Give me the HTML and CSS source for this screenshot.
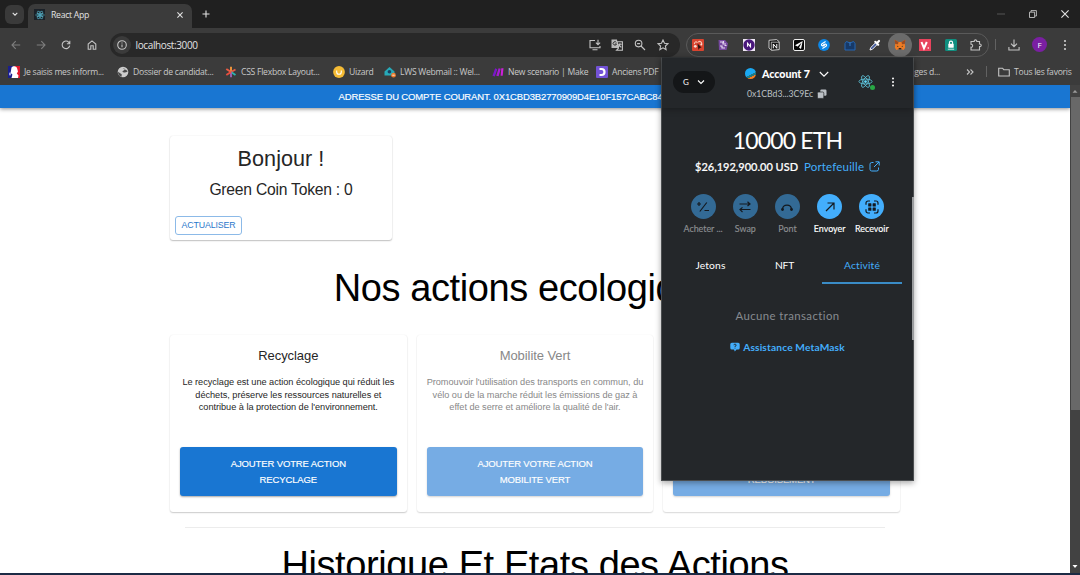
FILE: index.html
```html
<!DOCTYPE html>
<html lang="fr">
<head>
<meta charset="utf-8">
<title>React App</title>
<link rel="stylesheet" href="styles.css">
</head>
<body>
<svg width="0" height="0" class="defs">
  <symbol id="react" viewBox="-12 -12 24 24"><g fill="none" stroke="#5fc5dc" stroke-width="1.3"><ellipse rx="10.5" ry="4"/><ellipse rx="10.5" ry="4" transform="rotate(60)"/><ellipse rx="10.5" ry="4" transform="rotate(120)"/></g><circle r="2.2" fill="#61dafb"/></symbol>
</svg>
<div class="browser">
  <div class="tabstrip">
    <div class="tab-search"><svg width="8" height="8" viewBox="0 0 8 8"><path d="M1.7 2.8 4 5.1 6.3 2.8" class="ln light"/></svg></div>
    <div class="tab">
      <span class="favicon"><svg width="10" height="10"><use href="#react"/></svg></span>
      <span class="tab-title">React App</span>
      <svg class="tab-close" width="8" height="8" viewBox="0 0 8 8"><path d="M1.4 1.4 6.6 6.6M6.6 1.4 1.4 6.6" class="ln light"/></svg>
    </div>
    <svg class="newtab" width="8" height="8" viewBox="0 0 8 8"><path d="M4 .5V7.5M.5 4H7.5" class="ln light"/></svg>
    <div class="winbtns">
      <svg width="8" height="8" viewBox="0 0 8 8"><path d="M0 4H8" stroke="#555"/></svg>
      <svg width="8" height="8" viewBox="0 0 8 8"><path d="M.5 2.2H5.6V7.5H.5ZM2 2V.6H7.4V6H6" class="ln thin"/></svg>
      <svg width="8" height="8" viewBox="0 0 8 8"><path d="M.4 .4 7.6 7.6M7.6 .4 .4 7.6" class="ln light"/></svg>
    </div>
  </div>

  <div class="toolbar">
    <div class="nav">
      <svg width="10" height="10" viewBox="0 0 10 10"><path d="M9.2 5H1M4.7 1.2 1 5 4.7 8.8" class="ln dim"/></svg>
      <svg width="10" height="10" viewBox="0 0 10 10"><path d="M.8 5H9M5.3 1.2 9 5 5.3 8.8" class="ln dim"/></svg>
      <svg width="10" height="10" viewBox="0 0 10 10"><path d="M8.7 5.6A3.8 3.8 0 1 1 7.8 2.3L8.7 3.5M8.8 .8V3.7H5.9" class="ln"/></svg>
      <svg width="10" height="10" viewBox="0 0 10 10"><path d="M1.2 9.3V4L5 .9 8.8 4V9.3H6.2V5.8H3.8V9.3Z" class="ln"/></svg>
    </div>
    <div class="omnibox">
      <span class="siteinfo"><svg width="10" height="10" viewBox="0 0 10 10"><circle cx="5" cy="5" r="4.3" class="ln"/><path d="M5 4.5V7.3M5 2.5V3.6" class="ln"/></svg></span>
      <span class="url">localhost:3000</span>
      <span class="omni-actions">
        <svg width="12" height="12" viewBox="0 0 12 12"><path d="M6 1.5H1V8.8H11V7M3.5 10.7H8.5M9 .8V5.6M6.9 3.7 9 5.8 11.1 3.7" class="ln"/></svg>
        <svg width="12" height="12" viewBox="0 0 12 12"><path d="M.5 .5H6L7.5 9H.5Z" fill="#b9b9b9"/><path d="M6 2.8H11.4V11.3H5.5L7.5 9ZM7 5.2H10.6M9 4.2C9 6 8.3 7.4 7.2 8M7.9 6 10.3 8.4" class="ln"/><path d="M5.4 3.6A1.7 1.7 0 1 0 5.5 5H4" fill="none" stroke="#333"/></svg>
        <svg width="12" height="12" viewBox="0 0 12 12"><circle cx="4.6" cy="4.6" r="3.3" class="ln"/><path d="M7 7 11 11M3.1 4.6H6.1" class="ln"/></svg>
        <svg width="12" height="12" viewBox="0 0 12 12"><path d="M6 1 7.5 4.3 11 4.7 8.4 7 9.1 10.6 6 8.8 2.9 10.6 3.6 7 1 4.7 4.5 4.3Z" class="ln"/></svg>
      </span>
    </div>
    <div class="extensions">
      <svg viewBox="0 0 12 12"><rect width="12" height="12" rx="1" fill="#d9442f"/><path d="M2.3 5.2C2.8 2.2 4.8 2.2 5.3 4M6.3 3.3C7.3 1.6 9.6 2.6 9.8 5" fill="none" stroke="#f5c9b8" stroke-width="1.1"/><circle cx="3.3" cy="7.3" r="1.4" fill="#f9ded3"/><circle cx="9.3" cy="5.5" r="1" fill="#f9ded3"/><path d="M5.5 4.5 9.5 8.6 7.7 9 6.5 11Z" fill="#2a1512"/></svg>
      <svg viewBox="0 0 12 12"><path d="M1.5 1H8L11 4.5 9.5 11H2Z" fill="#76489f"/><path d="M3 3H6V5H9M3 7H5V9H8M7.5 6.5H9.5M6.5 2V4" fill="none" stroke="#e5d8f0" stroke-width="1.2"/></svg>
      <svg viewBox="0 0 12 12"><rect width="12" height="12" fill="#efe8f5"/><circle cx="6" cy="6" r="5.7" fill="#49177b"/><path d="M4.5 7.7V4.3L7.5 7.7V4.3" class="ln white"/></svg>
      <svg viewBox="0 0 12 12"><path d="M1 1.3 8.7.6 11.2 2.7V10.6L3.5 11.3 1 9Z" fill="#151515" stroke="#ddd" stroke-width=".9"/><path d="M3.2 3.2H11M3.3 3.2V11" stroke="#ddd" stroke-width=".7"/><path d="M5.3 9.3V5L8.8 9.3V5" fill="none" stroke="#fff"/></svg>
      <svg viewBox="0 0 12 12"><rect x=".5" y=".5" width="11" height="11" rx="1.5" fill="#080808" stroke="#eee"/><path d="M9.7 2 2 6.3 4.5 7.4 8 10Z" fill="#fff"/><path d="M4.6 7.5 8.7 3.5 5.5 9.8Z" fill="#080808"/></svg>
      <svg viewBox="0 0 12 12"><circle cx="6" cy="6" r="5.9" fill="#0c87e8"/><path d="M7.6 2.6 4.4 4.4C2.4 5.6 3.8 7.6 5.6 6.7L7.4 5.6M4.4 9.4 7.6 7.6C9.6 6.4 8.2 4.4 6.4 5.3L4.6 6.4" class="ln white"/></svg>
      <svg viewBox="0 0 12 12"><path d="M1 11V4.5L2.5 2.5 6 4 9.5 2.5 11 4.5V11Z" fill="#173967" stroke="#2467b5"/><path d="M6 3V7" fill="none" stroke="#347bc8"/></svg>
      <svg viewBox="0 0 12 12"><path d="M1 11 1.7 8.6 7 3.3 8.7 5 3.4 10.3Z" fill="#40589b" stroke="#f2f2f2"/><path d="M6.3 2.8 9.2 5.7M7.8 4.2 10 2" stroke="#fff" stroke-width="2.2" stroke-linecap="round"/></svg>
      <span class="ext-active"><svg viewBox="0 0 12 12"><path d="M.7.7 4.5 3H7.5L11.3.7 10.8 5 11.2 8.4 9.7 11 7.5 10.2H4.5L2.3 11 .8 8.4 1.2 5Z" fill="#ed7b25"/><path d="M.7.7 4.5 3 4 5.2 1.2 5ZM11.3.7 7.5 3 8 5.2 10.8 5Z" fill="#9c4b20"/><path d="M2.8 6.5 4.7 7.7 3.6 7.9ZM9.2 6.5 7.3 7.7 8.4 7.9Z" fill="#232"/><path d="M4.7 9H7.3V10.4H4.7Z" fill="#33231c"/></svg></span>
      <svg viewBox="0 0 12 12"><rect width="12" height="12" fill="#e8435d"/><path d="M2.5 3 5 9.2 7.8 3" fill="none" stroke="#fff" stroke-width="2"/><circle cx="9.3" cy="9" r=".8" fill="#fff"/></svg>
      <svg viewBox="0 0 12 12"><rect width="12" height="12" rx="1.5" fill="#108f80"/><rect x="3.3" y="4.8" width="5.4" height="4" rx=".6" fill="#fff"/><path d="M4.4 5V3.7A1.6 1.6 0 0 1 7.6 3.7V5" class="ln white"/><path d="M2.8 10.2H9.2" stroke="#c6eae5"/></svg>
      <svg viewBox="0 0 12 12"><path d="M1 2.5H4.2C3.8 .3 7.2 .3 6.8 2.5H9.5V5C11.8 4.6 11.8 8 9.5 7.6V11H1V8.2C3.2 8.4 3.2 5 1 5.2Z" class="ln"/></svg>
    </div>
    <span class="sep"></span>
    <svg class="download" width="12" height="12" viewBox="0 0 12 12"><path d="M6 .5V7.5M3 4.7 6 7.7 9 4.7M.9 8V11H11.1V8" class="ln"/></svg>
    <span class="avatar">F</span>
    <svg class="kebab" width="4" height="12" viewBox="0 0 4 12"><g fill="#d0d0d0"><circle cx="2" cy="2" r="1.1"/><circle cx="2" cy="6" r="1.1"/><circle cx="2" cy="10" r="1.1"/></g></svg>
  </div>

  <div class="bookmarks">
    <a><svg viewBox="0 0 12 12"><path d="M0 0H6V12H0Z" fill="#1a1e8c"/><path d="M6 0H12V12H6Z" fill="#e3182d"/><path d="M3.5 1.5C5-.3 9-.1 9.3 3L10 5.5 8.8 7.5 10.5 9.5 10 12H3.5L4.4 8.5 2.6 7Z" fill="#fff"/><path d="M1 8H3M2 6.5V9.5" stroke="#cdd0ff"/></svg>Je saisis mes inform...</a>
    <a><svg viewBox="0 0 12 12"><circle cx="6" cy="6" r="5.3" fill="#ccc"/><path d="M5.7 2C8 2 8.3 3.8 6.7 4.5 4.8 5.3 5.2 6.2 7.4 6.4 8.8 6.6 10.5 6 10.7 5M1 5.8 4.7 8.2 4.6 10.7C2.4 10.5 1 8.7 1 5.8ZM8 9.7 10.6 7.5" fill="#4a4a4a"/></svg>Dossier de candidat...</a>
    <a><svg viewBox="0 0 12 12"><g stroke-width="1.9"><path d="M6 6V.8" stroke="#f4983a"/><path d="M6 6 10.5 3.5" stroke="#e85c45"/><path d="M6 6 10.5 9" stroke="#2ab6b0"/><path d="M6 6V11.3" stroke="#9c62b3"/><path d="M6 6 1.3 9" stroke="#e94e3e"/><path d="M6 6 1.3 3" stroke="#ed5c43"/></g></svg>CSS Flexbox Layout...</a>
    <a><svg viewBox="0 0 12 12"><circle cx="6" cy="6" r="5.9" fill="#f5bb35"/><path d="M3.7 4.5V6A2.3 2.3 0 0 0 8.3 6V4.5" class="ln white"/></svg>Uizard</a>
    <a><svg viewBox="0 0 12 12"><path d="M.5 5.5 5.5 1 10.5 5.5V9.5H.5Z" fill="#27a9b8"/><circle cx="5.4" cy="5.7" r="1.8" fill="#193f61"/><circle cx="9.5" cy="9.2" r="2.4" fill="#ed7b2d"/><path d="M8.3 9.2H10.7" stroke="#fff" stroke-width=".8"/></svg>LWS Webmail :: Wel...</a>
    <a><svg viewBox="0 0 12 12"><path d="M.5 9.7 3.2 2.3 5.3 3.3 2.8 10.4Z" fill="#7b18c9"/><path d="M4.3 9.8 6.6 2.2 8.7 2.8 6.6 10.2Z" fill="#a91ad5"/><path d="M8.6 9.8 9.3 2.2H11.5L10.7 9.8Z" fill="#cd20d8"/></svg>New scenario | Make</a>
    <a><svg viewBox="0 0 12 12"><rect width="12" height="12" rx="1" fill="#7352d6"/><path d="M3.5 3H5.5A3 3 0 0 1 5.5 9H3.5" fill="none" stroke="#fff" stroke-width="2.2"/></svg>Anciens PDF</a>
    <span class="bm-cut">ages d...</span>
    <svg class="bm-more" viewBox="0 0 8 8"><path d="M1 1.5 3.5 4 1 6.5M4.5 1.5 7 4 4.5 6.5" class="ln"/></svg>
    <span class="sep"></span>
    <svg class="folder" viewBox="0 0 12 10"><path d="M.7 1.2H4.5L5.8 2.7H11.3V9H.7Z" class="ln"/></svg>
    <span class="bm-all">Tous les favoris</span>
  </div>
</div>

<div class="viewport">
  <main class="page">
    <header class="appbar">ADRESSE DU COMPTE COURANT. 0X1CBD3B2770909D4E10F157CABC84</header>
    <div class="content">
      <section class="card balance">
        <h5>Bonjour !</h5>
        <h6>Green Coin Token : 0</h6>
        <button class="outlined">ACTUALISER</button>
      </section>
      <h1 class="actions-title">Nos actions ecologiques</h1>
      <div class="cards">
        <section class="card action">
          <h6>Recyclage</h6>
          <p>Le recyclage est une action écologique qui réduit les<br>déchets, préserve les ressources naturelles et<br>contribue à la protection de l'environnement.</p>
          <button class="contained">AJOUTER VOTRE ACTION<br>RECYCLAGE</button>
        </section>
        <section class="card action disabled">
          <h6>Mobilite Vert</h6>
          <p>Promouvoir l'utilisation des transports en commun, du<br>vélo ou de la marche réduit les émissions de gaz à<br>effet de serre et améliore la qualité de l'air.</p>
          <button class="contained">AJOUTER VOTRE ACTION<br>MOBILITE VERT</button>
        </section>
        <section class="card action disabled">
          <h6></h6>
          <p></p>
          <button class="contained">AJOUTER VOTRE ACTION<br>REBOISEMENT</button>
        </section>
      </div>
      <hr>
      <h1 class="history-title">Historique Et Etats des Actions</h1>
    </div>
  </main>
  <div class="scrollbar">
    <svg width="10" height="12" viewBox="0 0 10 12"><path d="M2.5 7.7 5 5 7.5 7.7Z" fill="#9a9a9a"/></svg>
    <div class="thumb"></div>
    <svg width="10" height="14" viewBox="0 0 10 14"><path d="M2.5 6 5 9 7.5 6Z" fill="#fff"/></svg>
  </div>
</div>
<div class="taskbar-edge"></div>

<aside class="wallet">
  <div class="w-head">
    <div class="network">G<svg width="8" height="8" viewBox="0 0 8 8"><path d="M1 2.5 4 5.5 7 2.5" class="ln white"/></svg></div>
    <div class="account">
      <div class="acc-name"><span class="jazz"></span><b>Account 7</b><svg width="10" height="8" viewBox="0 0 10 8"><path d="M.8 2 5 6.2 9.2 2" class="ln white"/></svg></div>
      <div class="acc-addr"><span>0x1CBd3...3C9Ec</span><svg width="10" height="10" viewBox="0 0 10 10"><rect x="3.3" y=".5" width="6.2" height="6.2" rx="1.2" fill="#bbc0c5"/><rect x=".4" y="3" width="6.4" height="6.4" rx="1.2" fill="#bbc0c5" stroke="#24272a" stroke-width=".7"/></svg></div>
    </div>
    <div class="dapp"><svg width="15" height="15"><use href="#react"/></svg><i></i></div>
    <svg class="w-kebab" width="4" height="12" viewBox="0 0 4 12"><g fill="#fff"><circle cx="2" cy="2.5" r="1"/><circle cx="2" cy="6" r="1"/><circle cx="2" cy="9.5" r="1"/></g></svg>
  </div>
  <div class="amount">10000 ETH</div>
  <div class="fiat"><span class="usd">$26,192,900.00 USD</span><span class="portfolio">Portefeuille</span><svg width="11" height="11" viewBox="0 0 11 11"><path d="M4.5 1.5H2.7A1.7 1.7 0 0 0 1 3.2V8.3A1.7 1.7 0 0 0 2.7 10H7.8A1.7 1.7 0 0 0 9.5 8.3V6.5M6.5 .8H10.2V4.5M10 1 5 6" fill="none" stroke="#43aefc"/></svg></div>
  <div class="w-actions">
    <div class="off"><span><svg viewBox="0 0 14 14"><path d="M1 4H5M3 2V6M8.5 10.5H13M3.8 11.5 10.8 2.5" class="dk"/></svg></span>Acheter ...</div>
    <div class="off"><span><svg viewBox="0 0 14 14"><path d="M1.5 4H12M9.5 1.7 12 4 9.5 6M12.5 9.5H2M4.5 7.4 2 9.6 4.5 12" class="dk"/></svg></span>Swap</div>
    <div class="off"><span><svg viewBox="0 0 14 14"><path d="M2.5 9C3 3.7 11 3.7 11.5 9" class="dk"/><circle cx="2.5" cy="9.5" r="1.4"/><circle cx="11.5" cy="9.5" r="1.4"/></svg></span>Pont</div>
    <div><span><svg viewBox="0 0 14 14"><path d="M3 11 11 3M4.5 3H11V9.5" class="dk"/></svg></span>Envoyer</div>
    <div><span><svg viewBox="0 0 14 14"><path d="M1 4.8V3A2 2 0 0 1 3 1H5M9 1H11A2 2 0 0 1 13 3V4.8M13 9.2V11A2 2 0 0 1 11 13H9M5 13H3A2 2 0 0 1 1 11V9.2" class="dk"/><rect x="3.2" y="3.2" width="3.2" height="3.2" rx=".5"/><rect x="7.6" y="3.2" width="3.2" height="3.2" rx=".5"/><rect x="3.2" y="7.6" width="3.2" height="3.2" rx=".5"/><rect x="7.6" y="7.6" width="3.2" height="3.2" rx=".5"/></svg></span>Recevoir</div>
  </div>
  <div class="w-tabs"><span>Jetons</span><span class="nft">NFT</span><span class="current">Activité</span></div>
  <div class="empty">Aucune transaction</div>
  <div class="help"><svg width="10" height="10" viewBox="0 0 10 10"><path d="M1.8 .7H8.2Q9.7.7 9.7 2.2V6Q9.7 7.5 8.2 7.5H6.5L4.8 9.5 4 7.5H1.8Q.3 7.5.3 6V2.2Q.3.7 1.8.7Z" fill="#43aefc"/><path d="M3.9 3.2A1.1 1.1 0 1 1 5 4.3V5M5 5.7V6.5" fill="none" stroke="#24272a" stroke-width=".9"/></svg>Assistance MetaMask</div>
  <div class="w-scroll"></div>
</aside>
</body>
</html>
```
FILE: styles.css
```css
* { box-sizing: border-box; }
body { margin: 0; width: 1080px; height: 575px; overflow: hidden; display: flex; flex-direction: column; background: #fff; font-family: "Liberation Sans", Arial, sans-serif; }
h1, h5, h6, p { margin: 0; font-weight: 400; }
svg { display: block; flex: none; }
.defs { position: absolute; }
.ln { fill: none; stroke: #c4c4c4; stroke-width: 1.1; }
.ln.light { stroke: #e2e2e2; }
.ln.thin { stroke: #d8d8d8; stroke-width: .8; }
.ln.dim { stroke: #7e7e7e; }
.ln.white { stroke: #fff; }

/* browser chrome */
.browser { flex: none; height: 85px; background: #3b3b3b; font-family: "Open Sans", "Noto Sans", sans-serif; color: #d2d2d2; }
.tabstrip { height: 28px; background: #202020; display: flex; align-items: center; padding-left: 5px; }
.tab-search { width: 19px; height: 19px; border-radius: 6px; background: #3a3a3a; display: grid; place-items: center; }
.tab { align-self: flex-end; height: 24px; width: 164px; margin-left: 4px; padding: 0 8px 3px 6px; background: #3b3b3b; border-radius: 7px 7px 0 0; display: flex; align-items: center; }
.favicon { width: 11px; height: 11px; background: #1b2128; display: grid; place-items: center; }
.tab-title { margin-left: 6px; font-size: 8.7px; letter-spacing: -.3px; color: #e3e3e3; flex: 1; }
.newtab { margin-left: 10px; }
.winbtns { margin-left: auto; margin-right: 11px; display: flex; gap: 24px; }
.toolbar { height: 30px; background: #3b3b3b; display: flex; align-items: center; padding: 3px 0 0 11px; }
.nav { display: flex; gap: 15.2px; }
.omnibox { margin-left: 13px; width: 570px; height: 24px; border-radius: 12px; background: #282828; display: flex; align-items: center; padding: 0 11px 0 3px; }
.siteinfo { width: 18px; height: 18px; border-radius: 50%; background: #3b3b3b; display: grid; place-items: center; }
.url { margin-left: 5px; font-size: 10px; letter-spacing: -.38px; color: #e3e3e3; flex: 1; }
.omni-actions { display: flex; gap: 10.7px; }
.extensions { margin-left: 6.5px; width: 303px; height: 24px; border: 1px solid #5a5a5a; border-radius: 12px; padding: 0 6px 0 5px; display: flex; align-items: center; justify-content: space-between; }
.extensions svg { width: 12px; height: 12px; }
.ext-active { width: 24px; height: 24px; margin: 0 -6px; border-radius: 50%; background: #6b6b6b; display: grid; place-items: center; }
.sep { width: 1px; height: 11px; background: #626262; }
.toolbar .sep { margin-left: 6px; }
.download { margin-left: 12px; }
.avatar { margin-left: 12px; width: 15px; height: 15px; border-radius: 50%; background: #7a1fa2; color: #fff; font-size: 8px; line-height: 15px; text-align: center; }
.kebab { margin-left: 16px; }
.bookmarks { height: 27px; display: grid; grid-template-columns: 109px 108px 108px 51px 108px 104px 64px 292px 20px 12px 16px 1fr; padding-left: 8px; align-items: center; font-size: 8.6px; letter-spacing: -.26px; white-space: nowrap; color: #c9c9c9; }
.bookmarks a { display: flex; align-items: center; gap: 4px; }
.bookmarks a svg { width: 12px; height: 12px; }
.bm-cut { justify-self: end; padding-right: 12px; }
.bm-more { width: 8px; height: 8px; margin-left: 14px; }
.bookmarks .sep { margin-left: 14px; }
.folder { width: 12px; height: 10px; margin-left: 14px; }
.bm-all { margin-left: 14px; }

/* application page */
.viewport { flex: none; height: 488px; display: flex; }
.page { width: 1070px; overflow: hidden; background: #fff; }
.appbar { height: 23px; padding-left: 338.5px; background: #1976d2; color: #fff; font-size: 9.5px; letter-spacing: -.14px; line-height: 24px; box-shadow: 0 1px 4px rgba(0,0,0,.45); white-space: nowrap; -webkit-text-stroke: .15px; }
.content { width: 730px; margin: 0 auto; padding-top: 28px; display: flex; flex-direction: column; text-align: center; color: #262626; }
.card { background: #fff; border-radius: 3px; box-shadow: 0 1px 1.5px rgba(0,0,0,.24), 0 0 1.5px rgba(0,0,0,.1); }
.balance { width: 222px; height: 104px; padding: 10px 5px 5px; display: flex; flex-direction: column; }
.balance h5 { font-size: 21.6px; line-height: 26px; letter-spacing: .04px; }
.balance h6 { font-size: 15.7px; letter-spacing: -.24px; line-height: 20px; margin-top: 8px; }
.outlined { margin: auto auto 0 0; width: 67px; height: 19px; padding: 0 0 2px; border: 1px solid #8cbae8; border-radius: 3px; background: #fff; color: #2b78cb; font: 8.8px "Liberation Sans", Arial, sans-serif; letter-spacing: -.12px; }
h1 { font-size: 38px; letter-spacing: -.4px; line-height: 44px; color: #000; }
.actions-title { margin-top: 26px; }
.cards { display: grid; grid-template-columns: repeat(3, 1fr); gap: 10px; margin-top: 25px; }
.action { height: 177px; padding: 13px 10px 16px; display: flex; flex-direction: column; box-shadow: 0 1px 1.5px rgba(0,0,0,.2), 0 0 1.5px rgba(0,0,0,.08); }
.action h6 { font-size: 13px; letter-spacing: -.07px; line-height: 16px; height: 16px; }
.action p { margin: 12px -5px 0; font-size: 9.2px; letter-spacing: -.03px; line-height: 12.7px; white-space: nowrap; }
.contained { margin-top: auto; height: 49px; padding: 0; border: 0; border-radius: 3px; background: #1976d2; color: #fff; font: 9.5px/15.4px "Liberation Sans", Arial, sans-serif; letter-spacing: -.13px; -webkit-text-stroke: .15px; box-shadow: 0 1px 2px rgba(0,0,0,.35); }
.disabled { color: #888; box-shadow: 0 1px 1.5px rgba(0,0,0,.14), 0 0 1.5px rgba(0,0,0,.07); }
.disabled .contained { background: #76ace4; box-shadow: 0 1px 2px rgba(0,0,0,.18); }
hr { width: 700px; margin: 15px auto 0; border: 0; border-top: 1px solid #ececec; }
.history-title { margin-top: 15px; }
.scrollbar { width: 10px; background: #424242; display: flex; flex-direction: column; justify-content: space-between; }
.thumb { height: 313px; margin: 0 0 auto 1px; background: #686868; }
.taskbar-edge { height: 2px; background: #1c2b45; }

/* wallet popup, floating over the page */
.wallet { position: absolute; left: 661px; top: 57px; width: 253px; height: 424px; background: #24272a; border: 1px solid #4b4e50; border-top-color: #303335; box-shadow: 0 2px 6px rgba(0,0,0,.35); color: #fff; font-family: Lato, sans-serif; }
.w-head { height: 50px; display: flex; align-items: flex-start; padding-left: 11px; box-shadow: 0 2px 6px rgba(0,0,0,.25); }
.network { margin-top: 13px; width: 42px; height: 22px; border-radius: 11px; background: #141618; font-size: 8px; display: flex; align-items: center; justify-content: center; gap: 8px; }
.account { width: 84px; margin: 8px 0 0 30px; }
.acc-name { height: 15px; display: flex; align-items: center; }
.acc-name b { margin: 0 9px 0 6px; font-weight: 900; font-size: 10.7px; letter-spacing: -.06px; white-space: nowrap; }
.jazz { flex: none; width: 11px; height: 11px; border-radius: 50%; background: linear-gradient(155deg, #1aa8f2 57%, #247b83 58% 72%, #f47b20 73%); }
.acc-addr { height: 15px; margin-top: 5px; padding-left: 2px; display: flex; align-items: center; gap: 4px; font-size: 8.7px; letter-spacing: -.03px; color: #bbc0c5; white-space: nowrap; }
.dapp { position: relative; margin: 16px 0 0 29px; width: 17px; height: 15px; }
.dapp i { position: absolute; right: 0; bottom: -1px; width: 5px; height: 5px; border-radius: 50%; background: #28a745; }
.w-kebab { margin: 18px 0 0 16px; }
.amount { margin-top: 18px; height: 29px; line-height: 29px; font-size: 23px; letter-spacing: -.85px; text-align: center; }
.fiat { margin-top: 3px; height: 17px; padding-left: 33px; display: flex; align-items: center; font-size: 11px; white-space: nowrap; }
.usd { width: 109px; font-weight: 500; -webkit-text-stroke: .2px #fff; }
.portfolio { color: #43aefc; font-size: 11.5px; letter-spacing: .18px; margin-right: 5px; }
.w-actions { display: grid; grid-template-columns: repeat(5, 42.2px); margin: 19px 0 0 20px; font-size: 8.9px; line-height: 11px; white-space: nowrap; }
.w-actions div { display: flex; flex-direction: column; align-items: center; gap: 4px; -webkit-text-stroke: .15px; }
.w-actions div:first-child { margin-left: -3px; padding-left: 3px; }
.w-actions span { width: 25px; height: 25px; border-radius: 50%; background: #43aefc; display: grid; place-items: center; }
.w-actions svg { width: 14px; height: 14px; fill: #14191f; }
.dk { fill: none; stroke: #14191f; stroke-width: 1.2; }
.w-actions .off span { background: #336a95; }
.w-actions .off { color: #8b8e90; }
.w-tabs { margin: 15px 0 0 8px; display: grid; grid-template-columns: 81px 71px 80px; height: 31px; line-height: 33px; font-size: 10.3px; letter-spacing: .15px; text-align: center; }
.w-tabs .nft { padding-right: 4px; letter-spacing: -.3px; }
.w-tabs .current { color: #43aefc; border-bottom: 2px solid #3a8cc6; }
.empty { margin-top: 27px; line-height: 18px; font-size: 11.4px; letter-spacing: .4px; text-align: center; color: #878b90; }
.help { margin-top: 13px; height: 18px; display: flex; align-items: center; justify-content: center; gap: 3px; font-size: 10.2px; font-weight: 700; letter-spacing: .15px; color: #43aefc; }
.w-scroll { position: absolute; right: -1px; top: 139px; width: 2px; height: 143px; background: #9a9c9e; }
```
